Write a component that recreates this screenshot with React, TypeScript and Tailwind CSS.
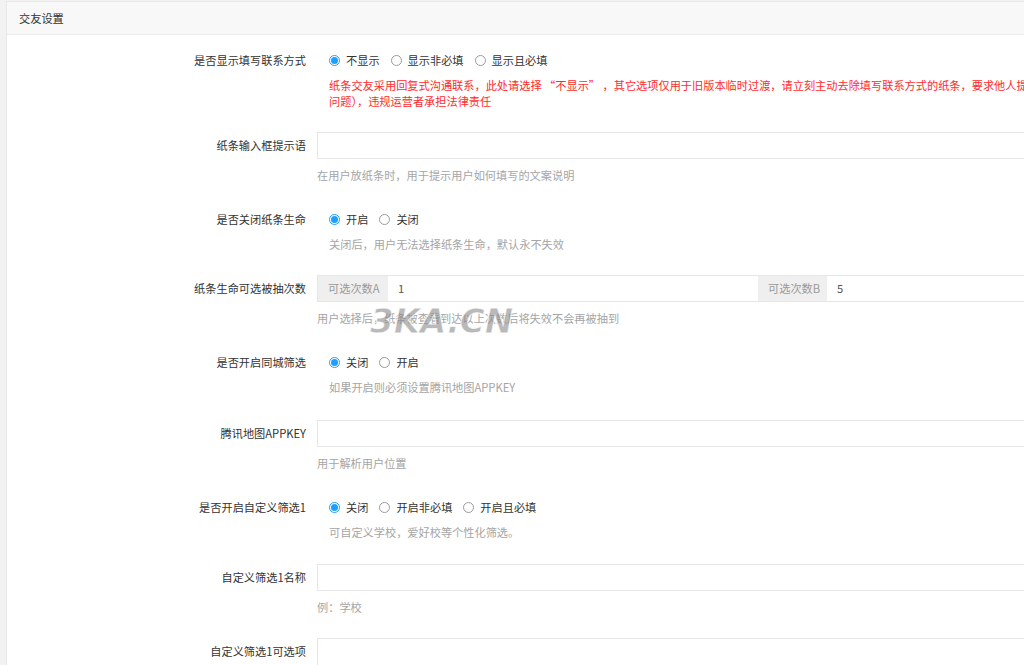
import type { ReactNode } from "react";

const font = { fontFamily: '"Noto Sans CJK SC", "Noto Sans", sans-serif' };

function Radio({ label, checked }: { label: string; checked?: boolean }) {
  return (
    <span className="flex items-center gap-[6px]">
      {checked ? (
        <span className="w-[11px] h-[11px] rounded-full border border-[#1e9fff] flex items-center justify-center">
          <span className="w-[7px] h-[7px] rounded-full bg-[#1e9fff]" />
        </span>
      ) : (
        <span className="w-[11px] h-[11px] rounded-full border border-[#9a9a9a]" />
      )}
      <span className="text-[#333]">{label}</span>
    </span>
  );
}

function Row({ label, children, help, red, radio, className }: { label: string; children: ReactNode; help?: ReactNode; red?: boolean; radio?: boolean; className?: string }) {
  return (
    <div className={"flex " + (className ?? "")}>
      <div className="w-[299px] shrink-0 text-right h-[27px] leading-[27px] text-[#333]">{label}</div>
      <div className={radio ? "flex-1 pl-[23px]" : "flex-1 pl-[11px] pr-[14px]"}>
        {children}
        {help && (
          <div className={(radio ? "mt-[3px] " : "mt-2 ") + "leading-[16px] " + (red ? "text-[#ff2b2b]" : "text-[#a5a5a5]")}>
            {help}
          </div>
        )}
      </div>
    </div>
  );
}

function Radios({ items }: { items: string[] }) {
  return (
    <div className="h-[27px] flex items-center gap-[11px]">
      {items.map((t, i) => (
        <Radio key={t} label={t} checked={i === 0} />
      ))}
    </div>
  );
}

function Input({ value }: { value?: string }) {
  return (
    <div className="h-[27px] border border-[#e6e6e6] bg-white px-[10px] leading-[25px] text-[#555]">{value}</div>
  );
}

export default function App() {
  return (
    <div className="w-[1024px] h-[665px] overflow-hidden bg-[#f2f2f2] pl-[6px] pt-[1px] text-[11.2px] relative" style={font}>
      <div className="w-[1204px] bg-white border border-[#e8e8e8]">
        <div className="h-[33px] bg-[#f8f8f8] border-b border-[#ececec] pl-[12px] leading-[33px] text-[#333]">交友设置</div>
        <div className="pt-[12px] flex flex-col gap-[23px]">
          <Row
            label="是否显示填写联系方式"
            radio
            red
            help={
              <>
                <div className="whitespace-nowrap">纸条交友采用回复式沟通联系，此处请选择 “不显示” ，其它选项仅用于旧版本临时过渡，请立刻主动去除填写联系方式的纸条，要求他人提供联系方式可能引发的一切（法律</div>
                <div className="whitespace-nowrap">问题），违规运营者承担法律责任</div>
              </>
            }
          >
            <Radios items={["不显示", "显示非必填", "显示且必填"]} />
          </Row>
          <Row label="纸条输入框提示语" help="在用户放纸条时，用于提示用户如何填写的文案说明">
            <Input />
          </Row>
          <Row label="是否关闭纸条生命" radio help="关闭后，用户无法选择纸条生命，默认永不失效">
            <Radios items={["开启", "关闭"]} />
          </Row>
          <Row label="纸条生命可选被抽次数" help="用户选择后，纸条被查看到达以上次数后将失效不会再被抽到">
            <div className="flex h-[27px] border border-[#e6e6e6]">
              <div className="w-[70px] bg-[#efefef] text-[#9a9a9a] pl-[10px] leading-[25px]">可选次数A</div>
              <div className="w-[370px] px-[10px] leading-[25px] text-[#555]">1</div>
              <div className="w-[69px] bg-[#efefef] text-[#9a9a9a] pl-[10px] leading-[25px]">可选次数B</div>
              <div className="flex-1 px-[10px] leading-[25px] text-[#555]">5</div>
            </div>
          </Row>
          <Row label="是否开启同城筛选" radio help="如果开启则必须设置腾讯地图APPKEY">
            <Radios items={["关闭", "开启"]} />
          </Row>
          <Row label="腾讯地图APPKEY" help="用于解析用户位置" className="mt-[2px]">
            <Input />
          </Row>
          <Row label="是否开启自定义筛选1" radio help="可自定义学校，爱好校等个性化筛选。">
            <Radios items={["关闭", "开启非必填", "开启且必填"]} />
          </Row>
          <Row label="自定义筛选1名称" help="例：学校" className="mt-[1px]">
            <Input />
          </Row>
          <Row label="自定义筛选1可选项">
            <div className="h-[80px] border border-[#e6e6e6]" />
          </Row>
        </div>
      </div>
      <div
        className="absolute left-[370px] top-[304px] text-[34px] leading-none font-black italic text-[#8a8a8a]/60 pointer-events-none"
        style={{ fontFamily: '"DejaVu Sans", sans-serif', WebkitTextStroke: "1px rgba(255,255,255,0.8)" }}
      >
        3KA.CN
      </div>
    </div>
  );
}
